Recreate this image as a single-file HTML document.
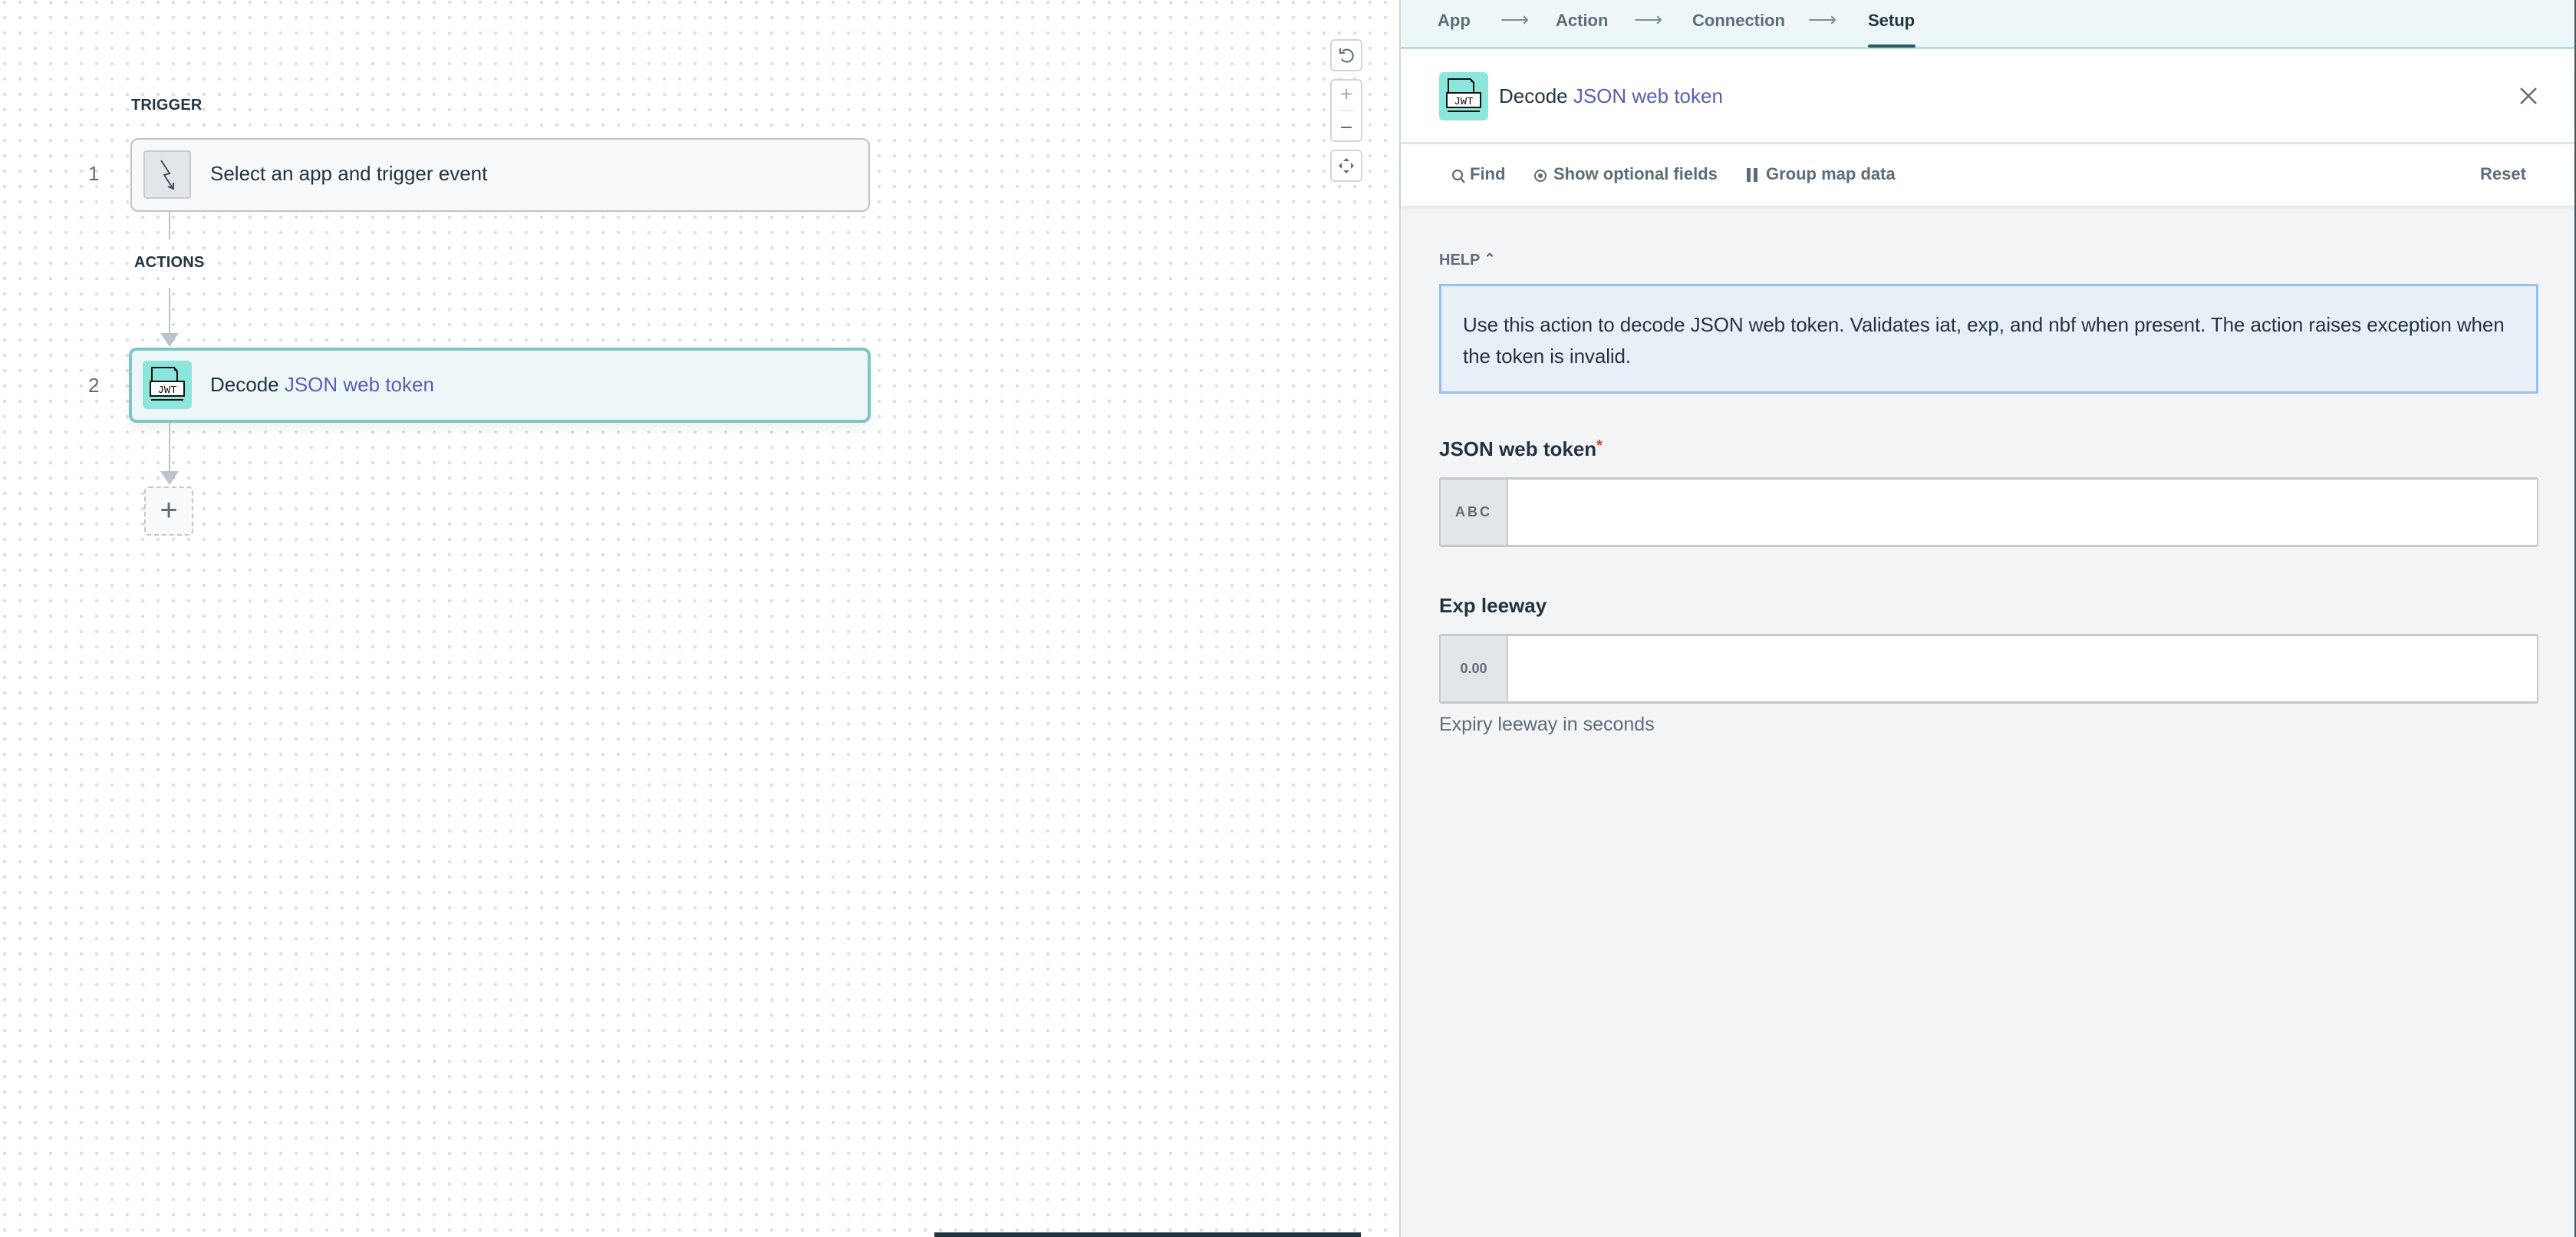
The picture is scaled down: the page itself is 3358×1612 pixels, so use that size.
<!DOCTYPE html>
<html><head><meta charset="utf-8"><style>
*{box-sizing:border-box;margin:0;padding:0}
body{width:3358px;height:1612px;overflow:hidden;position:relative;font-family:"Liberation Sans",sans-serif;color:#24343f;background:#fff}
.canvas{position:absolute;left:0;top:0;width:1824px;height:1612px;background-color:#fff;background-image:radial-gradient(circle,#dcdfe3 2px,transparent 2.5px);background-size:20px 20px;background-position:-4px -7px}
.abs{position:absolute}
.lbl{font-weight:bold;font-size:20px;color:#24343f;letter-spacing:0.2px}
.card{position:absolute;border-radius:10px}
.num{position:absolute;font-size:26px;color:#5d6c78}
.vline{position:absolute;width:2px;background:#bcc3ca}
.ctrl{position:absolute;left:1734px;width:42px;border:2px solid #d0d5da;border-radius:6px;background:#fff}
.panel{position:absolute;left:1824px;top:0;width:1534px;height:1612px;background:#f2f4f6;border-left:2px solid #cfd5da}
.tabs{position:absolute;left:0;top:0;width:100%;height:64px;background:#eef7f8;border-bottom:3px solid #b7dfe0;border-top-right-radius:14px}
.tab{position:absolute;top:14px;font-size:22px;font-weight:bold;color:#5d6c78}
.arr{position:absolute;top:10px;font-size:26px;color:#7d8a95}
.hdr{position:absolute;left:0;top:64px;width:100%;height:124px;background:#fff;border-bottom:3px solid #e3e6e9}
.tb{position:absolute;left:0;top:188px;width:100%;height:80px;background:#fff;box-shadow:0 4px 8px rgba(0,0,0,0.06)}
.tbi{position:absolute;top:26px;font-size:22px;font-weight:bold;color:#5d6c78}
.inp{position:absolute;left:50px;width:1433px;height:91px;background:#fff;border:2px solid #c2c9cf;border-top-width:3px;border-bottom-width:3px;border-radius:3px}
.addon{position:absolute;left:0;top:0;width:88px;height:100%;background:#e3e6e9;border-right:2px solid #c8ced3;font-size:18px;font-weight:bold;color:#5d6c78;text-align:center;line-height:85px}
</style></head><body>
<div class="canvas"></div>

<div class="abs lbl" style="left:171px;top:126px">TRIGGER</div>
<div class="num" style="left:115px;top:211px">1</div>
<div class="card" style="left:170px;top:180px;width:964px;height:96px;background:#f8f9fb;border:2px solid #bcc3ca"></div>
<div class="abs" style="left:187px;top:196px;width:62px;height:63px;background:#e3e6e9;border:2px solid #c5cbd1;border-radius:4px">
<svg width="58" height="59" viewBox="0 0 58 59"><path d="M21 11 L32 28 L25 30 L36 47" fill="none" stroke="#3d4f5c" stroke-width="2"/><path d="M30 45 L37 48 L37 40" fill="none" stroke="#3d4f5c" stroke-width="2"/></svg></div>
<div class="abs" style="left:274px;top:211px;font-size:26px;color:#24343f">Select an app and trigger event</div>

<div class="vline" style="left:220px;top:276px;height:36px"></div>
<div class="abs lbl" style="left:175px;top:331px">ACTIONS</div>
<div class="vline" style="left:220px;top:375px;height:65px"></div>
<div class="abs" style="left:209px;top:434px;width:0;height:0;border-left:12px solid transparent;border-right:12px solid transparent;border-top:18px solid #bcc3ca"></div>

<div class="num" style="left:115px;top:487px">2</div>
<div class="card" style="left:168px;top:453px;width:967px;height:98px;background:#eef7f8;border:4px solid #7fc5c7;box-shadow:0 8px 14px rgba(0,0,0,0.06)"></div>
<div class="abs" style="left:186px;top:470px;width:64px;height:63px;background:#8de6dc;border-radius:6px">
<svg width="64" height="63" viewBox="0 0 64 63"><path d="M12 43 V9 H41 L45 14 V27" fill="none" stroke="#111" stroke-width="2"/><path d="M41 8 L46 13 L41 13Z" fill="#111"/><rect x="10" y="27" width="44" height="19" fill="#fff" stroke="#111" stroke-width="2"/><text x="32" y="42" font-family="Liberation Mono,monospace" font-size="14" text-anchor="middle" fill="#111">JWT</text><path d="M11 51 H53" stroke="#111" stroke-width="2"/></svg></div>
<div class="abs" style="left:274px;top:486px;font-size:26px;color:#24343f">Decode <span style="color:#5a5fb0">JSON web token</span></div>

<div class="vline" style="left:220px;top:551px;height:65px"></div>
<div class="abs" style="left:209px;top:614px;width:0;height:0;border-left:12px solid transparent;border-right:12px solid transparent;border-top:18px solid #bcc3ca"></div>
<div class="abs" style="left:188px;top:634px;width:64px;height:64px;border:2px dashed #c2c8ce;border-radius:6px;background:#f8f9fb;text-align:center;line-height:58px;font-size:40px;color:#5d6c78">+</div>

<div class="ctrl" style="top:51px;height:42px"><svg width="38" height="38" viewBox="0 0 38 38"><path d="M14 14 A8 8 0 1 1 13 24" fill="none" stroke="#5d6c78" stroke-width="2"/><path d="M11 10 V16 H17" fill="none" stroke="#5d6c78" stroke-width="2"/></svg></div>
<div class="ctrl" style="top:103px;height:82px"><div class="abs" style="left:10px;top:39px;width:18px;height:1px;background:#d0d5da"></div><div class="abs" style="left:0;top:2px;width:38px;text-align:center;font-size:28px;color:#a5adb5">+</div><div class="abs" style="left:12px;top:60px;width:14px;height:2px;background:#5d6c78"></div></div>
<div class="ctrl" style="top:195px;height:42px"><svg width="38" height="38" viewBox="0 0 38 38" fill="#5d6c78"><path d="M19 9 L23 13 H15Z M19 29 L15 25 H23Z M9 19 L13 15 V23Z M29 19 L25 23 V15Z"/></svg></div>

<div class="abs" style="left:1218px;top:1606px;width:556px;height:6px;background:#24343f"></div>

<div class="panel">
 <div class="tabs">
  <div class="tab" style="left:48px">App</div>
  <div class="arr" style="left:130px">⟶</div>
  <div class="tab" style="left:202px">Action</div>
  <div class="arr" style="left:304px">⟶</div>
  <div class="tab" style="left:380px">Connection</div>
  <div class="arr" style="left:531px">⟶</div>
  <div class="tab" style="left:609px;color:#24343f">Setup</div>
  <div class="abs" style="left:609px;top:58px;width:62px;height:4px;background:#235d64;border-radius:2px"></div>
 </div>
 <div class="hdr">
  <div class="abs" style="left:50px;top:30px;width:64px;height:63px;background:#8de6dc;border-radius:6px">
  <svg width="64" height="63" viewBox="0 0 64 63"><path d="M12 43 V9 H41 L45 14 V27" fill="none" stroke="#111" stroke-width="2"/><path d="M41 8 L46 13 L41 13Z" fill="#111"/><rect x="10" y="27" width="44" height="19" fill="#fff" stroke="#111" stroke-width="2"/><text x="32" y="42" font-family="Liberation Mono,monospace" font-size="14" text-anchor="middle" fill="#111">JWT</text><path d="M11 51 H53" stroke="#111" stroke-width="2"/></svg></div>
  <div class="abs" style="left:128px;top:46px;font-size:26px;color:#24343f">Decode <span style="color:#5a5fb0">JSON web token</span></div>
  <svg class="abs" style="left:1455px;top:46px" width="30" height="30" viewBox="0 0 30 30"><path d="M5 5 L25 25 M25 5 L5 25" stroke="#5d6c78" stroke-width="2.5"/></svg>
 </div>
 <div class="tb">
  <svg class="abs" style="left:66px;top:32px" width="18" height="20" viewBox="0 0 18 20"><circle cx="8" cy="8" r="6" fill="none" stroke="#5d6c78" stroke-width="2.2"/><path d="M12 12 L17 18" stroke="#5d6c78" stroke-width="2.4"/></svg>
  <div class="tbi" style="left:90px">Find</div>
  <svg class="abs" style="left:173px;top:32px" width="18" height="18" viewBox="0 0 18 18"><circle cx="9" cy="9" r="7" fill="none" stroke="#5d6c78" stroke-width="2"/><circle cx="9" cy="9" r="3" fill="#5d6c78"/></svg>
  <div class="tbi" style="left:199px">Show optional fields</div>
  <div class="abs" style="left:451px;top:31px;width:5px;height:18px;background:#5d6c78"></div>
  <div class="abs" style="left:460px;top:31px;width:5px;height:18px;background:#5d6c78"></div>
  <div class="tbi" style="left:476px">Group map data</div>
  <div class="tbi" style="left:1407px">Reset</div>
 </div>
 <div class="abs" style="left:50px;top:328px;font-size:20px;font-weight:bold;color:#5d6c78">HELP <span style="font-size:18px;position:relative;top:-2px">&#8963;</span></div>
 <div class="abs" style="left:50px;top:370px;width:1433px;height:143px;background:#e8eff7;border:3px solid #9bbfec;padding:30px 28px 0 28px;font-size:26px;line-height:41px;color:#24343f;letter-spacing:-0.1px">Use this action to decode JSON web token. Validates iat, exp, and nbf when present. The action raises exception when the token is invalid.</div>

 <div class="abs" style="left:50px;top:570px;font-size:26px;font-weight:bold;color:#24343f">JSON web token<span style="color:#d1432f;font-size:20px;vertical-align:top">*</span></div>
 <div class="inp" style="top:622px"><div class="addon" style="letter-spacing:3px">ABC</div></div>

 <div class="abs" style="left:50px;top:774px;font-size:26px;font-weight:bold;color:#24343f">Exp leeway</div>
 <div class="inp" style="top:826px"><div class="addon">0.00</div></div>
 <div class="abs" style="left:50px;top:930px;font-size:25px;color:#5d6c78">Expiry leeway in seconds</div>
 <div class="abs" style="right:0;top:0;width:2px;height:1612px;background:#3f5560"></div>
</div>
</body></html>
